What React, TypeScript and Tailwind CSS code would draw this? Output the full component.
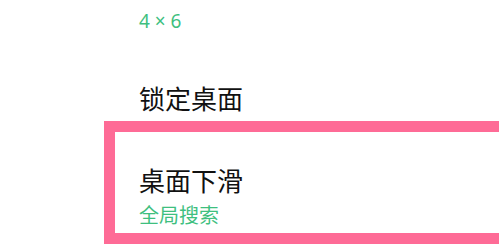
export default function App() {
  const font = { fontFamily: '"Noto Sans CJK SC", "Noto Sans", sans-serif' }
  return (
    <div className="relative w-[499px] h-[246px] overflow-hidden bg-white" style={font}>
      <div className="flex flex-col pl-[139px]">
        {/* grid size row (title scrolled off) */}
        <div className="mt-[-31px]">
          <p className="text-[26px] leading-[34px] text-[#111]">桌面布局</p>
          <p className="mt-[5px] text-[19px] leading-[26px] text-[#3fbf7f] font-['Noto_Sans',sans-serif]">4 × 6</p>
        </div>

        <div className="mt-[47px]">
          <p className="text-[26px] leading-[34px] text-[#111]">锁定桌面</p>
        </div>

        <div className="mt-[48px]">
          <p className="text-[26px] leading-[34px] text-[#111]">桌面下滑</p>
          <p className="mt-[5px] text-[20px] leading-[26px] text-[#3fbf7f]">全局搜索</p>
        </div>
      </div>

      {/* highlight frame */}
      <div className="absolute left-[104px] top-[121px] w-[420px] h-[123px] border-[11px] border-[#fe6b96]" />
    </div>
  )
}
